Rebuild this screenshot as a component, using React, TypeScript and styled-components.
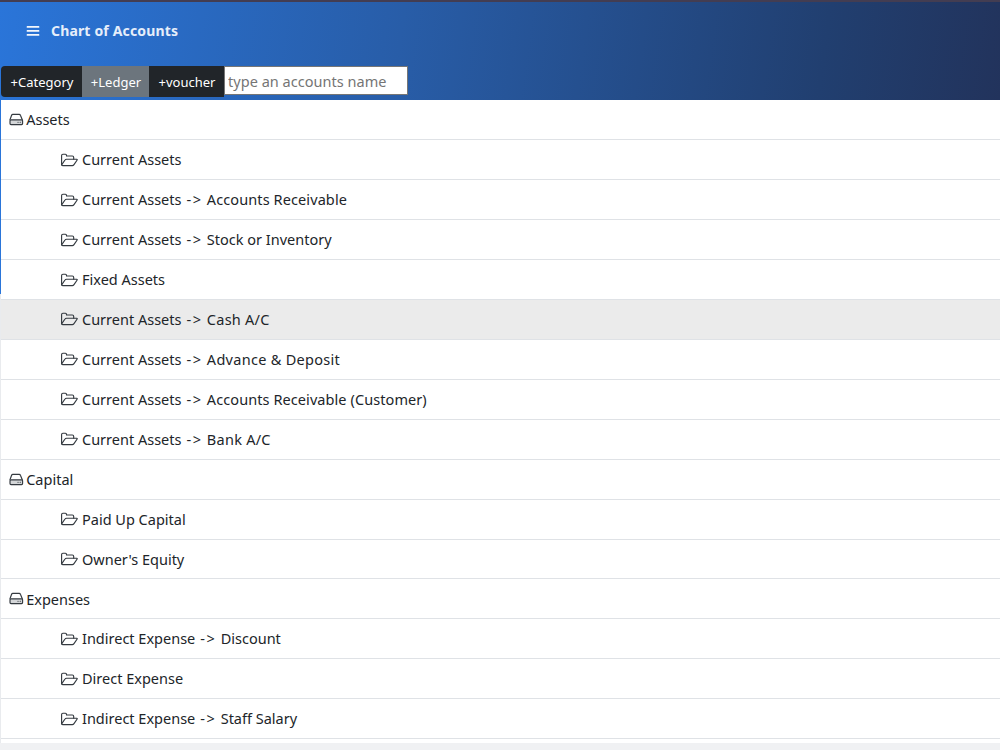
import React from "react";
import styled, { createGlobalStyle } from "styled-components";

const GlobalStyle = createGlobalStyle`
  * { box-sizing: border-box; }
  body { margin: 0; background: #f0f1f3; overflow: hidden; }
`;

const Page = styled.div`
  height: 750px;
  overflow: hidden;
  border-top: 2px solid #433d52;
  font-family: "Noto Sans", "Open Sans", sans-serif;
  color: #212529;
`;

const Header = styled.header`
  height: 98px;
  background: linear-gradient(98deg, #2a75d9 0%, #285da8 40%, #213f70 82%, #22335c 100%);
`;

const TitleBar = styled.div`
  height: 64px;
  padding: 0 26px 6px;
  display: flex;
  align-items: center;
  gap: 11px;
`;

const MenuIcon = styled.svg`
  display: block;
  width: 14px;
  height: 12px;
  fill: #f4f7fc;
`;

const Title = styled.h1`
  margin: 0;
  font-size: 14px;
  line-height: 20px;
  font-weight: 700;
  letter-spacing: 0.16px;
  color: #e6eefa;
`;

const Toolbar = styled.div`
  display: flex;
  padding-left: 1px;
`;

const ToolButton = styled.button<{ $width: number; $muted?: boolean; $first?: boolean }>`
  width: ${(p) => p.$width}px;
  height: 31px;
  padding: 1px 0 0 1px;
  border: 0;
  border-radius: ${(p) => (p.$first ? "4px 0 0 4px" : "0")};
  background: ${(p) => (p.$muted ? "#6c757d" : "#212529")};
  color: #fff;
  font: 13px/30px "Noto Sans", sans-serif;
  white-space: nowrap;
`;

const Search = styled.input`
  width: 184px;
  height: 29px;
  margin: 0;
  padding: 0 3px;
  border: 1px solid #767676;
  background: #fff;
  font: 14.5px "Noto Sans", sans-serif;
  letter-spacing: 0.03px;
  &::placeholder { color: #757575; opacity: 1; }
`;

const Body = styled.div`
  display: flex;
  height: 643px;
`;

const Rail = styled.div`
  width: 1px;
  background: linear-gradient(#2a75d9 194px, #e9ebee 194px);
`;

const List = styled.ul`
  flex: 1;
  margin: 0;
  padding: 0.4px 0 0;
  list-style: none;
  background: #fff;
`;

const Item = styled.li<{ $child?: boolean; $active?: boolean }>`
  display: flex;
  align-items: center;
  height: 39.93px;
  padding-left: ${(p) => (p.$child ? 59.4 : 6.5)}px;
  border-bottom: 1px solid #dfe2e6;
  background: ${(p) => (p.$active ? "#ebebeb" : "#fff")};
`;

const IconBox = styled.span<{ $child?: boolean }>`
  display: flex;
  width: ${(p) => (p.$child ? 21.6 : 18.7)}px;
`;

const Glyph = styled.svg`
  display: block;
  fill: none;
  stroke: #343a40;
  stroke-width: 1.15;
  stroke-linejoin: round;
  stroke-linecap: round;
`;

const Label = styled.span<{ $tracking?: number }>`
  margin-bottom: 0.8px;
  font-size: 14.5px;
  line-height: 24px;
  white-space: pre;
  letter-spacing: ${(p) => p.$tracking ?? 0}px;
`;

const Arrow = styled(Label)`
  flex: none;
  width: 16px;
  margin-left: 5px;
  margin-right: 4.4px;
`;

type Account = {
  name: string;
  sub?: string;
  tracking?: number;
  child?: boolean;
  active?: boolean;
};

const accounts: Account[] = [
  { name: "Assets" },
  { name: "Current Assets", child: true },
  { name: "Current Assets", sub: "Accounts Receivable", tracking: 0.1, child: true },
  { name: "Current Assets", sub: "Stock or Inventory", child: true },
  { name: "Fixed Assets", child: true },
  { name: "Current Assets", sub: "Cash A/C", tracking: 0.25, child: true, active: true },
  { name: "Current Assets", sub: "Advance & Deposit", tracking: 0.29, child: true },
  { name: "Current Assets", sub: "Accounts Receivable (Customer)", tracking: 0.08, child: true },
  { name: "Current Assets", sub: "Bank A/C", tracking: 0.25, child: true },
  { name: "Capital" },
  { name: "Paid Up Capital", child: true },
  { name: "Owner's Equity", child: true },
  { name: "Expenses" },
  { name: "Indirect Expense", sub: "Discount", child: true },
  { name: "Direct Expense", child: true },
  { name: "Indirect Expense", sub: "Staff Salary", child: true },
];

const FolderOpen = () => (
  <Glyph width="18" height="14" viewBox="0 0 18 14">
    <path d="M1.6 11.8V2.5Q1.6 1.2 2.9 1.2H5.4Q6.5 1.2 6.5 2.3V3H12.3Q13.7 3 13.7 4.4V6.2" />
    <path d="M1.6 11.8L5 7Q5.5 6.2 6.5 6.2H16.7Q17.6 6.3 17 7.2L14 11.6Q13.3 12.6 12.3 12.6H2.7Q1.6 12.6 1.6 11.5" />
  </Glyph>
);

const Drive = () => (
  <Glyph width="16" height="13" viewBox="0 0 16 13">
    <path d="M2 6.8L3.6 2.3Q3.9 1.4 4.9 1.4H11.1Q12.1 1.4 12.4 2.3L14.3 6.8" />
    <rect x="2" y="6.8" width="12.6" height="4.8" rx="1" fill="#d4d6d8" />
    <path d="M10 9.2H10.1M12.2 9.2H12.3" />
  </Glyph>
);

export default function App() {
  return (
    <Page>
      <GlobalStyle />
      <Header>
        <TitleBar>
          <MenuIcon viewBox="0 0 14 12">
            <rect x="0.7" y="1" width="12.6" height="1.7" rx="0.5" />
            <rect x="0.7" y="5" width="12.6" height="1.7" rx="0.5" />
            <rect x="0.7" y="9" width="12.6" height="1.7" rx="0.5" />
          </MenuIcon>
          <Title>Chart of Accounts</Title>
        </TitleBar>
        <Toolbar>
          <ToolButton $width={81} $first>+Category</ToolButton>
          <ToolButton $width={67} $muted>+Ledger</ToolButton>
          <ToolButton $width={75}>+voucher</ToolButton>
          <Search placeholder="type an accounts name" />
        </Toolbar>
      </Header>
      <Body>
        <Rail />
        <List>
          {accounts.map((a) => (
            <Item key={a.name + (a.sub ?? "")} $child={a.child} $active={a.active}>
              <IconBox $child={a.child}>{a.child ? <FolderOpen /> : <Drive />}</IconBox>
              <Label>{a.name}</Label>
              {a.sub && (
                <>
                  <Arrow $tracking={1.6}>-&gt;</Arrow>
                  <Label $tracking={a.tracking}>{a.sub}</Label>
                </>
              )}
            </Item>
          ))}
        </List>
      </Body>
    </Page>
  );
}
